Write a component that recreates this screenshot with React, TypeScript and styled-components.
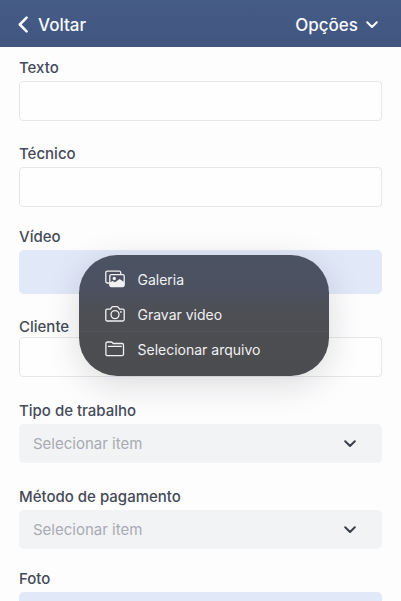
import React, { useId } from "react";
import styled, { createGlobalStyle } from "styled-components";

const GlobalStyle = createGlobalStyle`
  *, *::before, *::after { box-sizing: border-box; }
  body {
    margin: 0;
    background: #fdfdfe;
    font-family: Inter, "Liberation Sans", sans-serif;
    overflow-x: hidden;
  }
  html { scrollbar-width: none; }
  button, input, select { font: inherit; margin: 0; }
`;

const Screen = styled.div`
  display: flex;
  flex-direction: column;
  height: 100vh;
  overflow: hidden;
`;

const TopBar = styled.header`
  display: flex;
  align-items: center;
  justify-content: space-between;
  flex: none;
  height: 47px;
  padding: 2px 22px 0 18px;
  background: linear-gradient(#455c87, #41557f);
`;

const BarButton = styled.button<{ $gap: number }>`
  display: flex;
  align-items: center;
  gap: ${(p) => p.$gap}px;
  padding: 0;
  border: 0;
  background: none;
  color: #f8fafd;
  font-size: 17px;
  font-weight: 500;
  line-height: 24px;
`;

const Form = styled.form`
  display: flex;
  flex-direction: column;
  padding: 11px 19px 0;
`;

const Group = styled.div<{ $space?: number; $labelGap?: number }>`
  display: flex;
  flex-direction: column;
  gap: ${(p) => p.$labelGap ?? 3}px;
  margin-top: ${(p) => p.$space ?? 0}px;
`;

const Label = styled.label`
  color: #454b58;
  font-size: 15px;
  font-weight: 500;
  line-height: 20px;
`;

const TextInput = styled.input`
  width: 100%;
  height: 40px;
  padding: 0 14px;
  border: 1px solid #e6e7ea;
  border-radius: 4px;
  background: #fefefe;
  color: #454b58;
  font-size: 15px;
  outline: none;
`;

const MediaBox = styled.div`
  position: relative;
`;

const MediaButton = styled.button`
  display: block;
  width: 100%;
  height: 44px;
  border: 0;
  border-radius: 5px;
  background: #e1e8f8;
`;

const SelectBox = styled.div`
  display: grid;
  align-items: center;
  > * { grid-area: 1 / 1; }
  > svg {
    justify-self: end;
    margin-right: 25px;
    pointer-events: none;
  }
`;

const Select = styled.select`
  appearance: none;
  width: 100%;
  height: 39px;
  padding: 0 48px 0 14px;
  border: 0;
  border-radius: 5px;
  background: #f2f3f5;
  color: #a8abb3;
  font-size: 15px;
  outline: none;
`;

const Menu = styled.div`
  position: absolute;
  z-index: 2;
  top: 5px;
  left: calc(50% + 3px);
  transform: translateX(-50%);
  display: flex;
  flex-direction: column;
  width: 250px;
  padding: 6px 0 10px;
  border-radius: 38px;
  background: linear-gradient(#4b5261 0, #4b5161 28%, #4e4f54 46%, #4b4c4f 100%);
  box-shadow: 0 8px 34px rgba(20, 22, 30, 0.15);
`;

const MenuItem = styled.button<{ $divided?: boolean }>`
  display: flex;
  align-items: center;
  gap: 13px;
  height: 35px;
  padding: 0 26px;
  border: 0;
  border-top: 1px solid ${(p) => (p.$divided ? "#535458" : "transparent")};
  background: none;
  color: #f0f1f3;
  font-size: 14px;
  font-weight: 400;
  text-align: left;
`;

const BackIcon = () => (
  <svg width="10" height="17" viewBox="0 0 10 17" fill="none" aria-hidden="true">
    <path d="M8.6 1.6 1.8 8.5l6.8 6.9" stroke="#f8fafd" strokeWidth="2.5" strokeLinecap="round" strokeLinejoin="round" />
  </svg>
);

const Chevron = ({ color }: { color: string }) => (
  <svg width="14" height="8" viewBox="0 0 14 8" fill="none" aria-hidden="true">
    <path d="M2.2 1.3 7 6l4.8-4.7" stroke={color} strokeWidth="2" strokeLinecap="round" strokeLinejoin="round" />
  </svg>
);

const GalleryIcon = () => (
  <svg width="20" height="18" viewBox="0 0 20 18" fill="none" aria-hidden="true">
    <path d="M4.8 13H2.3A1.5 1.5 0 0 1 .8 11.500V2.600A1.500 1.500 0 0 1 2.300 1.100h11.900a1.500 1.500 0 0 1 1.500 1.500v2" stroke="#f0f1f3" strokeWidth="1.3" />
    <rect x="4.8" y="4.6" width="14.4" height="11.9" rx="1.5" stroke="#f0f1f3" strokeWidth="1.3" />
    <circle cx="9.3" cy="8.5" r="1.7" fill="#f0f1f3" />
    <path d="M4.8 12.4 7.500 10.900l2.600 1.400 4.400-3.200 4.700 2.800v3.600a1 1 0 0 1-1 1H5.800a1 1 0 0 1-1-1z" fill="#f0f1f3" />
  </svg>
);

const CameraIcon = () => (
  <svg width="20" height="18" viewBox="0 0 20 18" fill="none" stroke="#f0f1f3" strokeWidth="1.3" strokeLinejoin="round" aria-hidden="true">
    <path d="M2.3 4.1h2.500c.5 0 .8-.2 1.100-.6l.9-1.300c.3-.4.7-.6 1.200-.6h4c.5 0 .9.200 1.200.6l.9 1.300c.3.4.6.6 1.100.6h2.500c.9 0 1.500.6 1.500 1.500v8.900c0 .9-.6 1.500-1.500 1.500H2.300c-.9 0-1.500-.6-1.500-1.500V5.600c0-.9.600-1.500 1.500-1.500z" />
    <circle cx="10" cy="9.6" r="4" />
    <circle cx="15.9" cy="6.9" r=".9" fill="#f0f1f3" stroke="none" />
  </svg>
);

const FolderIcon = () => (
  <svg width="20" height="18" viewBox="0 0 20 18" fill="none" stroke="#f0f1f3" strokeWidth="1.3" strokeLinejoin="round" aria-hidden="true">
    <path d="M.9 14.300V3.400c0-.8.6-1.400 1.400-1.400h3.800c.5 0 .9.200 1.200.5l.9 1h8.900c.9 0 1.400.6 1.400 1.400v9.400c0 .8-.5 1.400-1.400 1.400H2.300c-.8 0-1.400-.6-1.400-1.400z" />
    <path d="M3.400 6.400h12.900" strokeLinecap="round" />
  </svg>
);

function TextField({ label, space, labelGap }: { label: string; space?: number; labelGap?: number }) {
  const id = useId();
  return (
    <Group $space={space} $labelGap={labelGap}>
      <Label htmlFor={id}>{label}</Label>
      <TextInput id={id} type="text" />
    </Group>
  );
}

function SelectField({ label }: { label: string }) {
  const id = useId();
  return (
    <Group $space={24}>
      <Label htmlFor={id}>{label}</Label>
      <SelectBox>
        <Select id={id} defaultValue="">
          <option value="">Selecionar item</option>
        </Select>
        <Chevron color="#3a3f47" />
      </SelectBox>
    </Group>
  );
}

function MediaField({ label, children }: { label: string; children?: React.ReactNode }) {
  const id = useId();
  return (
    <Group $space={20}>
      <Label htmlFor={id}>{label}</Label>
      <MediaBox>
        <MediaButton id={id} type="button" />
        {children}
      </MediaBox>
    </Group>
  );
}

export default function App() {
  return (
    <Screen>
      <GlobalStyle />
      <TopBar>
        <BarButton $gap={10} type="button">
          <BackIcon />
          Voltar
        </BarButton>
        <BarButton $gap={7} type="button">
          Opções
          <Chevron color="#f8fafd" />
        </BarButton>
      </TopBar>
      <Form>
        <TextField label="Texto" />
        <TextField label="Técnico" space={23} />
        <MediaField label="Vídeo">
          <Menu role="menu">
            <MenuItem type="button" role="menuitem">
              <GalleryIcon />
              Galeria
            </MenuItem>
            <MenuItem type="button" role="menuitem">
              <CameraIcon />
              Gravar video
            </MenuItem>
            <MenuItem type="button" role="menuitem" $divided>
              <FolderIcon />
              Selecionar arquivo
            </MenuItem>
          </Menu>
        </MediaField>
        <TextField label="Cliente" space={23} labelGap={0} />
        <SelectField label="Tipo de trabalho" />
        <SelectField label="Método de pagamento" />
        <MediaField label="Foto" />
      </Form>
    </Screen>
  );
}
